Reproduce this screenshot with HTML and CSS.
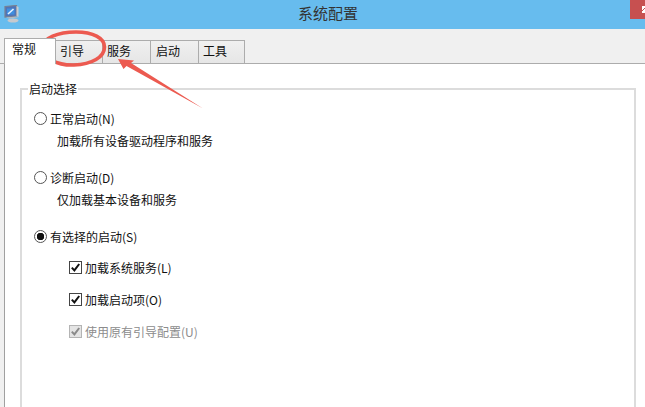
FILE: index.html
```html
<!DOCTYPE html>
<html lang="zh-CN">
<head>
<meta charset="utf-8">
<title>系统配置</title>
<link rel="stylesheet" href="styles.css">
</head>
<body>
<div class="window">
  <header class="titlebar">
    <svg class="app-icon" width="16" height="18" viewBox="0 0 16 18">
      <path d="M1 1.5L12.5 .5V11L1 12z" fill="#4f74b8" stroke="#7a8090" stroke-width="1.2"/>
      <path d="M3 3.5h7.5v6H3z" fill="#3f8fe0"/>
      <path d="M4 9l5.5-5" stroke="#e8f4ff" stroke-width="1.6"/>
      <path d="M12.5 1l2 1v10l-2-1z" fill="#c8ccd2"/>
      <path d="M2 12.5l10.5-1 2 .8-9 1.4z" fill="#b4bac2"/>
      <ellipse cx="9" cy="15.5" rx="5.5" ry="2" fill="#c6c9ce"/>
    </svg>
    <span class="title">系统配置</span>
    <span class="close"></span>
  </header>
  <nav class="tabstrip">
    <span class="tab tab-active">常规</span>
    <span class="tab tab-boot">引导</span>
    <span class="tab tab-service">服务</span>
    <span class="tab tab-startup">启动</span>
    <span class="tab tab-tools">工具</span>
  </nav>
  <main class="panel">
    <fieldset class="group">
      <legend class="legend">启动选择</legend>
      <div class="option">
        <span class="radio"></span><span>正常启动(N)</span>
      </div>
      <p class="desc">加载所有设备驱动程序和服务</p>
      <div class="option option-gap">
        <span class="radio"></span><span>诊断启动(D)</span>
      </div>
      <p class="desc">仅加载基本设备和服务</p>
      <div class="option option-gap">
        <span class="radio radio-on"></span><span>有选择的启动(S)</span>
      </div>
      <div class="check-row">
        <svg class="check" width="13" height="13" viewBox="0 0 13 13"><rect x=".5" y=".5" width="12" height="12" fill="#fff" stroke="#444"/><path d="M2.8 6.6l2.6 2.8 4.8-6.4" fill="none" stroke="#111" stroke-width="2"/></svg>
        <span>加载系统服务(L)</span>
      </div>
      <div class="check-row">
        <svg class="check" width="13" height="13" viewBox="0 0 13 13"><rect x=".5" y=".5" width="12" height="12" fill="#fff" stroke="#444"/><path d="M2.8 6.6l2.6 2.8 4.8-6.4" fill="none" stroke="#111" stroke-width="2"/></svg>
        <span>加载启动项(O)</span>
      </div>
      <div class="check-row check-disabled">
        <svg class="check" width="13" height="13" viewBox="0 0 13 13"><rect x=".5" y=".5" width="12" height="12" fill="#e4e4e4" stroke="#b4b4b4"/><path d="M2.8 6.6l2.6 2.8 4.8-6.4" fill="none" stroke="#8a8a8a" stroke-width="2"/></svg>
        <span>使用原有引导配置(U)</span>
      </div>
    </fieldset>
  </main>
  <svg class="annotation" width="645" height="407" viewBox="0 0 645 407">
    <path d="M42.500 47C43 38 58 32 76 32C93 32 104.500 38 104.500 47C104.500 57 92 64.500 74 65C57 65.500 42.500 58 42.500 47Z" fill="none" stroke="#ec5a50" stroke-width="3.6"/>
    <path d="M203 108.500L131 63 134 60.500 118 59 123.500 69 126.500 66z" fill="#ec5a50"/>
  </svg>
</div>
</body>
</html>
```
FILE: styles.css
```css
* { box-sizing: border-box; }
html, body { margin: 0; padding: 0; }
body {
  width: 645px;
  height: 407px;
  overflow: hidden;
  background: #f0f0f0;
  font-family: "Noto Sans CJK SC", "Liberation Sans", sans-serif;
  font-size: 12px;
  color: #111;
}
.window {
  position: relative;
  width: 645px;
  height: 407px;
  display: flex;
  flex-direction: column;
}
.titlebar {
  position: relative;
  flex: 0 0 29px;
  background: #67bcee;
  display: flex;
  justify-content: center;
  padding-left: 11px;
}
.app-icon { position: absolute; left: 4px; top: 5px; }
.title { font-size: 15px; color: #333; line-height: 26px; }
.close {
  position: absolute;
  right: 0;
  top: 0;
  width: 15px;
  height: 19px;
  background: #c75050;
}
.close::after {
  content: "";
  position: absolute;
  left: 12px;
  top: 6px;
  width: 3px;
  height: 7px;
  background: linear-gradient(135deg, #fff 0 45%, transparent 45% 55%, #fff 55%);
}
.tabstrip {
  flex: 0 0 34px;
  padding: 9px 0 0 4px;
  display: flex;
  align-items: flex-end;
  border-bottom: 1px solid #acacac;
}
.tab {
  height: 24px;
  margin-left: -1px;
  margin-bottom: -1px;
  padding-left: 5px;
  border: 1px solid #acacac;
  background: linear-gradient(#f0f0f0, #e6e6e6);
  line-height: 20px;
}
.tab-active {
  position: relative;
  z-index: 1;
  width: 52px;
  height: 26px;
  margin-left: 0;
  padding-left: 7px;
  border-bottom: 0;
  background: #fff;
  line-height: 20px;
}
.tab-boot { width: 48px; padding-left: 4px; }
.tab-service { width: 49px; padding-left: 4px; }
.tab-startup { width: 49px; }
.tab-tools { width: 47px; padding-left: 4px; }
.panel {
  flex: 1;
  margin-left: 4px;
  background: #fff;
  border-left: 1px solid #a0a0a0;
  padding: 16px 9px 0 15px;
}
.group {
  margin: 0;
  padding: 0 0 0 12px;
  height: 340px;
  border: 2px solid #dcdcdc;
  border-bottom: 0;
  min-width: 0;
}
.legend {
  margin-left: -6px;
  padding: 0 1px;
  line-height: 18px;
}
.option {
  display: flex;
  align-items: center;
  gap: 3px;
  height: 18px;
  margin-top: 11px;
}
.option-gap { margin-top: 18px; }
.radio {
  width: 13px;
  height: 13px;
  border: 1px solid #555;
  border-radius: 50%;
  background: #fff;
}
.radio-on {
  background: radial-gradient(circle, #111 0 3.5px, #fff 4px);
}
.desc {
  margin: 5px 0 0 23px;
  line-height: 18px;
}
.check-row {
  display: flex;
  align-items: center;
  gap: 3px;
  height: 18px;
  margin: 14px 0 0 35px;
}
.option + .check-row { margin-top: 13px; }
.check { flex: none; }
.check-disabled { color: #8c8c8c; }
.annotation {
  position: absolute;
  left: 0;
  top: 0;
  pointer-events: none;
}
```
